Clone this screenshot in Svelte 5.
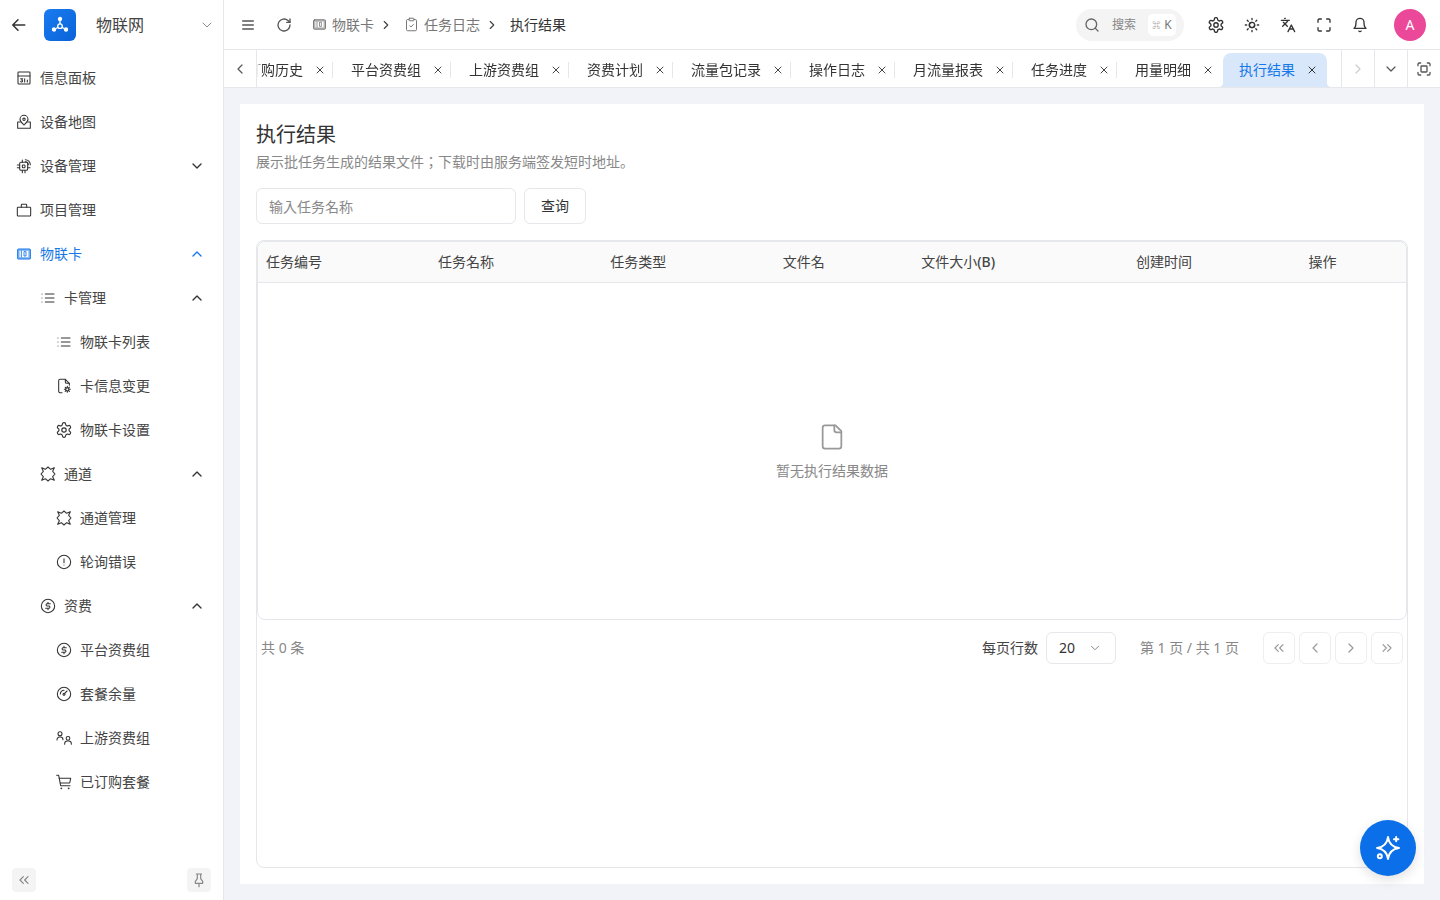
<script>
  const icons = {
    board: '<rect x="3" y="3" width="18" height="18" rx="1"/><path d="M3 9h18"/><path d="M7 13h3l-1.500 2a1.500 1.500 0 1 1-1.500 2"/><path d="M13 13v5M17 15v3"/>',
    map: '<path d="M18 8c0 3.800-4.200 6.800-6 8.500-1.800-1.700-6-4.700-6-8.500a6 6 0 0 1 12 0z"/><circle cx="12" cy="8" r="1.800"/><path d="M6.500 12H2.500v9.500h19V12h-4"/>',
    chip: '<rect x="5.500" y="6.500" width="12" height="12" rx="2"/><rect x="9.500" y="10.500" width="4" height="4" rx="1"/><path d="M2 10.500h3.500M2 14.500h3.500M17.500 14.500H21M9.500 3v3.500M9.500 18.500V22M13.500 18.500V22"/><path d="M14 2.500a7.500 7.500 0 0 1 7.500 7.500M14 5.500a4.500 4.500 0 0 1 4.500 4.500"/>',
    case: '<rect x="2" y="8" width="20" height="13" rx="1"/><path d="M8 8V4.500a1 1 0 0 1 1-1h6a1 1 0 0 1 1 1V8"/>',
    list: '<path d="M8 6h13M8 12h13M8 18h13M3 6h.01M3 12h.01M3 18h.01"/>',
    filecog: '<path d="M14 2H6a2 2 0 0 0-2 2v16a2 2 0 0 0 2 2h3"/><path d="M14 2v4a2 2 0 0 0 2 2h4l-6-6z"/><path d="M20 8v3"/><circle cx="17" cy="17" r="2.500"/><path d="M17 12.500v2M17 19.500v2M21.500 17h-2M14.500 17h-2M20.200 13.800l-1.400 1.400M15.200 18.800l-1.400 1.400M20.200 20.200l-1.400-1.400M15.200 15.200l-1.400-1.400"/>',
    gear: '<g transform="translate(-1.200 -1.200) scale(1.100)"><path d="M12.220 2h-.44a2 2 0 0 0-2 2v.18a2 2 0 0 1-1 1.730l-.43.250a2 2 0 0 1-2 0l-.15-.080a2 2 0 0 0-2.730.730l-.220.380a2 2 0 0 0 .730 2.730l.150.100a2 2 0 0 1 1 1.720v.510a2 2 0 0 1-1 1.740l-.150.090a2 2 0 0 0-.730 2.730l.220.380a2 2 0 0 0 2.730.730l.150-.080a2 2 0 0 1 2 0l.430.250a2 2 0 0 1 1 1.730V20a2 2 0 0 0 2 2h.44a2 2 0 0 0 2-2v-.18a2 2 0 0 1 1-1.730l.430-.250a2 2 0 0 1 2 0l.150.080a2 2 0 0 0 2.730-.730l.220-.390a2 2 0 0 0-.730-2.730l-.150-.080a2 2 0 0 1-1-1.740v-.500a2 2 0 0 1 1-1.740l.150-.090a2 2 0 0 0 .730-2.730l-.220-.380a2 2 0 0 0-2.730-.730l-.150.080a2 2 0 0 1-2 0l-.430-.250a2 2 0 0 1-1-1.730V4a2 2 0 0 0-2-2z"/><circle cx="12" cy="12" r="3"/></g>',
    channel: '<path d="M2.500 2.500 8 5l4-3.500L16 5l5.500-2.500L19 8l3.500 4L19 16l2.500 5.500L16 19l-4 3.500L8 19l-5.500 2.500L5 16l-3.500-4L5 8z"/>',
    alert: '<circle cx="12" cy="12" r="10"/><path d="M12 7v6M12 16.500h.01"/>',
    dollar: '<circle cx="12" cy="12" r="10"/><path d="M15.500 8.500h-5a1.800 1.800 0 0 0 0 3.500h3a1.800 1.800 0 0 1 0 3.500h-5M12 6.500v2M12 15.500v2"/>',
    gauge: '<circle cx="12" cy="12" r="10"/><path d="m13 11 3.500-3.500"/><circle cx="12" cy="12.500" r="1.500"/><path d="M6.500 12a5.500 5.500 0 0 1 5.500-5.500"/>',
    users: '<circle cx="6" cy="5.500" r="3"/><path d="M1.500 15v-.5a4 4 0 0 1 4-4h1a4 4 0 0 1 4 4"/><circle cx="18" cy="12.500" r="2.800"/><path d="M13 21.500v-1a4 4 0 0 1 4-4h2a4 4 0 0 1 4 4v1"/>',
    cart: '<path d="M1 2h3l3 15.500h14"/><path d="M4.800 6.500H22l-1.500 7H6.500"/><circle cx="8" cy="21.500" r=".6"/><circle cx="19" cy="21.500" r=".6"/>',
    card: '<rect x="2.500" y="4.500" width="19" height="15" rx="1.500" fill="currentColor" fill-opacity=".5"/><rect x="5.500" y="7.500" width="13" height="9" fill="#fff" stroke="none"/><path stroke-width="1.300" d="M8 7.500v9M12 9v6h3V9z"/>',
    clip: '<rect x="8" y="2" width="8" height="4" rx="1"/><path d="M16 4h2a2 2 0 0 1 2 2v14a2 2 0 0 1-2 2H6a2 2 0 0 1-2-2V6a2 2 0 0 1 2-2h2"/><path d="m9 14 2 2 4-4"/>'
  };

  const menu = [
    { icon: 'board', label: '信息面板', depth: 0 },
    { icon: 'map', label: '设备地图', depth: 0 },
    { icon: 'chip', label: '设备管理', depth: 0, arrow: 'down' },
    { icon: 'case', label: '项目管理', depth: 0 },
    { icon: 'card', label: '物联卡', depth: 0, arrow: 'up', active: true },
    { icon: 'list', label: '卡管理', depth: 1, arrow: 'up' },
    { icon: 'list', label: '物联卡列表', depth: 2 },
    { icon: 'filecog', label: '卡信息变更', depth: 2 },
    { icon: 'gear', label: '物联卡设置', depth: 2 },
    { icon: 'channel', label: '通道', depth: 1, arrow: 'up' },
    { icon: 'channel', label: '通道管理', depth: 2 },
    { icon: 'alert', label: '轮询错误', depth: 2 },
    { icon: 'dollar', label: '资费', depth: 1, arrow: 'up' },
    { icon: 'dollar', label: '平台资费组', depth: 2 },
    { icon: 'gauge', label: '套餐余量', depth: 2 },
    { icon: 'users', label: '上游资费组', depth: 2 },
    { icon: 'cart', label: '已订购套餐', depth: 2 }
  ];

  const tabs = ['订购历史', '平台资费组', '上游资费组', '资费计划', '流量包记录', '操作日志', '月流量报表', '任务进度', '用量明细', '执行结果'];

  const columns = [
    { label: '任务编号', width: 172 },
    { label: '任务名称', width: 172.5 },
    { label: '任务类型', width: 172.5 },
    { label: '文件名', width: 138.5 },
    { label: '文件大小', unit: '(B)', width: 215 },
    { label: '创建时间', width: 172.5 },
    { label: '操作', width: 105.5 }
  ];
</script>

{#snippet icon(name, size = 16)}
  <svg class="ico" width={size} height={size} viewBox="0 0 24 24" fill="none" stroke="currentColor" stroke-width="1.600" stroke-linecap="round" stroke-linejoin="round">{@html icons[name]}</svg>
{/snippet}

{#snippet chevron(dir, size = 16, weight = 2)}
  <svg class="ico" width={size} height={size} viewBox="0 0 24 24" fill="none" stroke="currentColor" stroke-width={weight} stroke-linecap="round" stroke-linejoin="round">
    {#if dir === 'down'}<path d="m6 9 6 6 6-6" />{/if}
    {#if dir === 'up'}<path d="m18 15-6-6-6 6" />{/if}
    {#if dir === 'left'}<path d="m15 18-6-6 6-6" />{/if}
    {#if dir === 'right'}<path d="m9 18 6-6-6-6" />{/if}
    {#if dir === 'lefts'}<path d="m11 17-5-5 5-5M18 17l-5-5 5-5" />{/if}
    {#if dir === 'rights'}<path d="m6 17 5-5-5-5M13 17l5-5-5-5" />{/if}
  </svg>
{/snippet}

<div class="app">
  <aside class="sidebar">
    <div class="brand">
      <svg class="back" width="18" height="18" viewBox="0 0 24 24" fill="none" stroke="currentColor" stroke-width="2" stroke-linecap="round" stroke-linejoin="round"><path d="m12 19-7-7 7-7M5 12h16" /></svg>
      <div class="logo">
        <svg width="18" height="18" viewBox="0 0 24 24" fill="none" stroke="#fff" stroke-width="1.800"><circle cx="12" cy="13.500" r="3" /><circle cx="12" cy="4" r="2" fill="#fff" /><circle cx="4" cy="18" r="2" fill="#fff" /><circle cx="20" cy="18" r="2" fill="#fff" /><path d="M12 6v4.500M6 17l3.500-2M18 17l-3.500-2" /></svg>
      </div>
      <span class="brand-name">物联网</span>
      <span class="brand-arrow">{@render chevron('down', 16, 1.5)}</span>
    </div>
    <nav class="menu">
      {#each menu as item}
        <div class="item depth{item.depth}" class:active={item.active}>
          <span class="item-icon">{@render icon(item.icon)}</span>
          <span class="item-label">{item.label}</span>
          {#if item.arrow}<span class="item-arrow">{@render chevron(item.arrow)}</span>{/if}
        </div>
      {/each}
    </nav>
    <div class="side-foot">
      <button class="foot-btn">{@render chevron('lefts', 16, 1.8)}</button>
      <button class="foot-btn">
        <svg width="16" height="16" viewBox="0 0 24 24" fill="none" stroke="currentColor" stroke-width="1.800" stroke-linecap="round" stroke-linejoin="round"><path d="M12 17v5M8 3h8M9.500 3v7l-3 4v3h11v-3l-3-4V3" /></svg>
      </button>
    </div>
  </aside>

  <div class="main">
    <header class="topbar">
      <span class="tool first">
        <svg width="16" height="16" viewBox="0 0 24 24" fill="none" stroke="currentColor" stroke-width="2" stroke-linecap="round"><path d="M4 6h16M4 12h16M4 18h16" /></svg>
      </span>
      <span class="tool refresh">
        <svg width="16" height="16" viewBox="0 0 24 24" fill="none" stroke="currentColor" stroke-width="2" stroke-linecap="round" stroke-linejoin="round"><path d="M21 12a9 9 0 1 1-3-6.700L21 8" /><path d="M21 3v5h-5" /></svg>
      </span>
      <div class="crumbs">
        <span class="crumb">{@render icon('card', 15)}物联卡</span>
        <span class="sep">{@render chevron('right', 14, 2)}</span>
        <span class="crumb">{@render icon('clip', 15)}任务日志</span>
        <span class="sep">{@render chevron('right', 14, 2)}</span>
        <span class="crumb current">执行结果</span>
      </div>
      <div class="top-right">
        <div class="search">
          <svg width="16" height="16" viewBox="0 0 24 24" fill="none" stroke="currentColor" stroke-width="2" stroke-linecap="round"><circle cx="11" cy="11" r="8" /><path d="m21 21-4.300-4.300" /></svg>
          <span class="search-text">搜索</span>
          <span class="kbd"><span class="cmd">⌘</span>K</span>
        </div>
        <span class="act">
          <svg class="ico" width="16" height="16" viewBox="0 0 24 24" fill="none" stroke="currentColor" stroke-width="1.900" stroke-linecap="round" stroke-linejoin="round">{@html icons.gear}</svg>
        </span>
        <span class="act">
          <svg width="16" height="16" viewBox="0 0 24 24" fill="none" stroke="currentColor" stroke-width="2" stroke-linecap="round"><path d="M12 8a4 4 0 1 0 4 4" /><circle cx="12" cy="12" r="4" /><path d="M12 2v2M12 20v2M4.900 4.900l1.400 1.400M17.700 17.700l1.400 1.400M2 12h2M20 12h2M6.300 17.700l-1.400 1.400M19.100 4.900l-1.400 1.400" /></svg>
        </span>
        <span class="act">
          <svg width="16" height="16" viewBox="0 0 24 24" fill="none" stroke="currentColor" stroke-width="2" stroke-linecap="round" stroke-linejoin="round"><path d="m5 8 6 6M4 14l6-6 2-3M2 5h12M7 2h1M22 22l-5-10-5 10M14 18h6" /></svg>
        </span>
        <span class="act">
          <svg width="16" height="16" viewBox="0 0 24 24" fill="none" stroke="currentColor" stroke-width="2" stroke-linecap="round" stroke-linejoin="round"><path d="M8 3H5a2 2 0 0 0-2 2v3M21 8V5a2 2 0 0 0-2-2h-3M3 16v3a2 2 0 0 0 2 2h3M16 21h3a2 2 0 0 0 2-2v-3" /></svg>
        </span>
        <span class="act">
          <svg width="16" height="16" viewBox="0 0 24 24" fill="none" stroke="currentColor" stroke-width="2" stroke-linecap="round" stroke-linejoin="round"><path d="M6 8a6 6 0 0 1 12 0c0 7 3 9 3 9H3s3-2 3-9" /><path d="M10.300 21a1.940 1.940 0 0 0 3.400 0" /></svg>
        </span>
        <span class="avatar">A</span>
      </div>
    </header>

    <div class="tabbar">
      <button class="tab-ctl left">{@render chevron('left', 16, 1.8)}</button>
      <div class="tabs">
        {#each tabs as tab, i}
          <div class="tab" class:on={i === tabs.length - 1}>
            <span>{tab}</span>
            <svg class="x" width="12" height="12" viewBox="0 0 24 24" fill="none" stroke="currentColor" stroke-width="2" stroke-linecap="round"><path d="M18 6 6 18M6 6l12 12" /></svg>
          </div>
        {/each}
      </div>
      <button class="tab-ctl muted">{@render chevron('right', 16, 1.8)}</button>
      <button class="tab-ctl">{@render chevron('down', 16, 1.8)}</button>
      <button class="tab-ctl">
        <svg width="16" height="16" viewBox="0 0 24 24" fill="none" stroke="currentColor" stroke-width="2" stroke-linecap="round" stroke-linejoin="round"><path d="M3 7V5a2 2 0 0 1 2-2h2M17 3h2a2 2 0 0 1 2 2v2M21 17v2a2 2 0 0 1-2 2h-2M7 21H5a2 2 0 0 1-2-2v-2" /><rect x="7.500" y="7.500" width="9" height="9" rx="1" /></svg>
      </button>
    </div>

    <main class="content">
      <section class="card">
        <h1>执行结果</h1>
        <p class="desc">展示批任务生成的结果文件；下载时由服务端签发短时地址。</p>
        <div class="filters">
          <input class="field" placeholder="输入任务名称" />
          <button class="query">查询</button>
        </div>
        <div class="panel">
          <div class="table">
            <div class="thead">
              {#each columns as col}
                <div class="th" style="width: {col.width}px">{col.label}{#if col.unit}<span class="unit">{col.unit}</span>{/if}</div>
              {/each}
            </div>
            <div class="empty">
              <svg width="28" height="28" viewBox="0 0 24 24" fill="none" stroke="currentColor" stroke-width="1.500" stroke-linecap="round" stroke-linejoin="round"><path d="M15 2H6a2 2 0 0 0-2 2v16a2 2 0 0 0 2 2h12a2 2 0 0 0 2-2V7z" /><path d="M14 2v4a2 2 0 0 0 2 2h4" /></svg>
              <span>暂无执行结果数据</span>
            </div>
          </div>
          <div class="pager">
            <span class="total">共 0 条</span>
            <span class="rows">每页行数</span>
            <div class="select"><span>20</span>{@render chevron('down', 14, 1.5)}</div>
            <span class="page-info">第 1 页 / 共 1 页</span>
            <div class="page-btns">
              <button>{@render chevron('lefts', 16, 1.8)}</button>
              <button>{@render chevron('left', 16, 1.8)}</button>
              <button>{@render chevron('right', 16, 1.8)}</button>
              <button>{@render chevron('rights', 16, 1.8)}</button>
            </div>
          </div>
        </div>
      </section>
    </main>
  </div>

  <button class="fab">
    <svg width="28" height="28" viewBox="0 0 24 24" fill="none" stroke="#fff" stroke-width="1.700" stroke-linecap="round" stroke-linejoin="round"><path d="M12 2.600c.8 5.800 3.600 8.600 9.400 9.400-5.800.8-8.600 3.600-9.400 9.400-.8-5.800-3.600-8.600-9.400-9.400 5.800-.8 8.600-3.600 9.400-9.400z" /><path d="M19 2.500v3.800M17.100 4.400h3.800" /><circle cx="5" cy="19" r="1.700" /></svg>
  </button>
</div>

<style>
  :global(body) {
    margin: 0;
    background: #f1f3f8;
    font-family: "Noto Sans", "Noto Sans CJK JP", sans-serif;
    font-size: 14px;
    line-height: 20px;
    color: #333;
  }

  button {
    font: inherit;
    padding: 0;
    border: none;
    background: none;
    color: inherit;
  }

  .ico {
    display: block;
    flex: none;
  }

  .app {
    display: flex;
    width: 1440px;
    height: 900px;
    overflow: hidden;
    position: relative;
  }

  .sidebar {
    width: 224px;
    flex: none;
    box-sizing: border-box;
    background: #fff;
    border-right: 1px solid #e5e7eb;
    display: flex;
    flex-direction: column;
  }

  .brand {
    height: 50px;
    flex: none;
    display: flex;
    align-items: center;
    padding-left: 9px;
    color: #333;
  }

  .back {
    flex: none;
    margin-right: 17px;
  }

  .logo {
    width: 32px;
    height: 32px;
    flex: none;
    border-radius: 6px;
    background: linear-gradient(135deg, #1a7bf0, #0a62d8);
    display: flex;
    align-items: center;
    justify-content: center;
  }

  .brand-name {
    margin-left: 20px;
    font-size: 16px;
    line-height: 24px;
    color: #444;
  }

  .brand-arrow {
    margin-left: auto;
    margin-right: 8px;
    color: #888;
  }

  .menu {
    flex: 1;
    padding-top: 6px;
  }

  .item {
    height: 44px;
    display: flex;
    align-items: center;
    color: #333;
  }

  .depth0 { padding-left: 16px; }
  .depth1 { padding-left: 40px; }
  .depth2 { padding-left: 56px; }

  .item-icon {
    width: 16px;
    margin-right: 8px;
    flex: none;
  }

  .item-label {
    color: #444;
  }

  .item-arrow {
    margin-left: auto;
    margin-right: 18px;
    color: #333;
  }

  .item.active .item-label,
  .item.active .item-arrow,
  .item.active .item-icon {
    color: #1677e8;
  }

  .side-foot {
    height: 32px;
    flex: none;
    padding: 0 12px;
    display: flex;
    justify-content: space-between;
  }

  .foot-btn {
    width: 24px;
    height: 24px;
    border-radius: 4px;
    background: #f4f4f5;
    color: #888;
    display: flex;
    align-items: center;
    justify-content: center;
  }

  .main {
    flex: 1;
    min-width: 0;
    display: flex;
    flex-direction: column;
  }

  .topbar {
    height: 50px;
    flex: none;
    box-sizing: border-box;
    background: #fff;
    border-bottom: 1px solid #e5e7eb;
    display: flex;
    align-items: center;
    padding-left: 16px;
  }

  .tool {
    color: #555;
    display: block;
    height: 16px;
  }

  .refresh {
    margin-left: 20px;
  }

  .crumbs {
    display: flex;
    align-items: center;
    margin-left: 20px;
    color: #777;
  }

  .crumb {
    display: flex;
    align-items: center;
    gap: 5px;
  }

  .crumb.current {
    color: #333;
  }

  .sep {
    margin: 0 11px 0 5px;
    color: #444;
  }

  .top-right {
    margin-left: auto;
    display: flex;
    align-items: center;
    padding-right: 14px;
  }

  .search {
    width: 108px;
    height: 32px;
    box-sizing: border-box;
    border-radius: 16px;
    background: #f4f4f5;
    display: flex;
    align-items: center;
    padding-left: 8px;
    color: #666;
  }

  .search-text {
    margin-left: 12px;
    font-size: 12px;
    color: #888;
  }

  .kbd {
    margin-left: 12px;
    width: 28px;
    height: 22px;
    border-radius: 5px;
    background: #fff;
    font-size: 12px;
    color: #777;
    display: flex;
    align-items: center;
    justify-content: center;
    gap: 4px;
  }

  .cmd {
    font-size: 8px;
  }

  .act {
    width: 16px;
    height: 16px;
    margin-left: 20px;
    color: #333;
  }

  .search + .act {
    margin-left: 24px;
  }

  .avatar {
    width: 32px;
    height: 32px;
    margin-left: 26px;
    border-radius: 50%;
    background: #ec4899;
    color: #fff;
    display: flex;
    align-items: center;
    justify-content: center;
    font-size: 14px;
  }

  .tabbar {
    height: 38px;
    flex: none;
    box-sizing: border-box;
    background: #fff;
    border-bottom: 1px solid #e5e7eb;
    display: flex;
  }

  .tab-ctl {
    width: 33px;
    flex: none;
    box-sizing: border-box;
    border-left: 1px solid #e5e7eb;
    color: #555;
    display: flex;
    align-items: center;
    justify-content: center;
  }

  .tab-ctl.left {
    border-left: none;
    border-right: 1px solid #e5e7eb;
  }

  .tab-ctl.muted {
    color: #ccc;
  }

  .tabs {
    flex: 1;
    min-width: 0;
    display: flex;
    align-items: flex-end;
    overflow: hidden;
    mask-image: linear-gradient(90deg, transparent, #000 5px);
  }

  .tab {
    position: relative;
    flex: none;
    box-sizing: border-box;
    height: 34px;
    padding: 0 7px 0 18px;
    display: flex;
    align-items: center;
    gap: 11px;
    color: #333;
  }

  .tab:first-child {
    margin-left: -28px;
  }

  .tab::after {
    content: "";
    position: absolute;
    right: 0;
    top: 9px;
    height: 16px;
    width: 1px;
    background: #e5e7eb;
  }

  .tab .x {
    flex: none;
    color: #444;
  }

  .tab:nth-last-child(2)::after {
    display: none;
  }

  .tab.on {
    margin-left: 2px;
    padding: 0 9px 0 16px;
    background: #d9e7fb;
    border-radius: 8px 8px 0 0;
    color: #1677e8;
  }

  .tab.on::before,
  .tab.on::after {
    content: "";
    position: absolute;
    top: auto;
    bottom: 0;
    width: 5px;
    height: 5px;
  }

  .tab.on::before {
    left: -5px;
    background: radial-gradient(circle at 0 0, transparent 5px, #d9e7fb 5.5px);
  }

  .tab.on::after {
    right: -5px;
    background: radial-gradient(circle at 100% 0, transparent 5px, #d9e7fb 5.5px);
  }

  .tab.on .x {
    color: #333;
  }

  .content {
    flex: 1;
    min-height: 0;
    padding: 16px;
    display: flex;
  }

  .card {
    flex: 1;
    background: #fff;
    padding: 16px 16px;
    display: flex;
    flex-direction: column;
    min-width: 0;
  }

  h1 {
    margin: 0;
    font-size: 20px;
    font-weight: 400;
    line-height: 30px;
    color: #333;
  }

  .desc {
    margin: 1px 0 0;
    line-height: 22px;
    color: #888;
  }

  .filters {
    display: flex;
    gap: 8px;
    margin-top: 15px;
  }

  .field {
    width: 260px;
    height: 36px;
    box-sizing: border-box;
    border: 1px solid #e5e7eb;
    border-radius: 6px;
    padding: 1px 12px 0;
    font: inherit;
    outline: none;
  }

  .field::placeholder {
    color: #888;
  }

  .query {
    width: 62px;
    height: 36px;
    box-sizing: border-box;
    border: 1px solid #e5e7eb;
    border-radius: 6px;
    color: #333;
  }

  .panel {
    flex: 1;
    margin-top: 16px;
    min-height: 0;
    border: 1px solid #e5e7eb;
    border-radius: 8px;
  }

  .table {
    height: 379px;
    box-sizing: border-box;
    border: 1px solid #e5e7eb;
    border-radius: 8px;
    display: flex;
    flex-direction: column;
  }

  .thead {
    height: 40px;
    flex: none;
    display: flex;
    background: #fafafa;
    border-bottom: 1px solid #e5e7eb;
    border-radius: 8px 8px 0 0;
  }

  .th {
    box-sizing: border-box;
    padding: 0 8px;
    line-height: 40px;
    color: #444;
  }

  .unit {
    font-weight: 500;
  }

  .empty {
    flex: 1;
    display: flex;
    flex-direction: column;
    align-items: center;
    justify-content: center;
    gap: 10px;
    padding-top: 1px;
    color: #888;
  }

  .empty svg {
    color: #999;
  }

  .pager {
    display: flex;
    align-items: center;
    height: 32px;
    margin-top: 12px;
    padding: 0 4px;
  }

  .total {
    color: #888;
    margin-right: auto;
  }

  .rows {
    color: #444;
  }

  .select {
    width: 70px;
    height: 32px;
    margin-left: 8px;
    box-sizing: border-box;
    border: 1px solid #e5e7eb;
    border-radius: 6px;
    padding: 0 13px 0 12px;
    display: flex;
    align-items: center;
    justify-content: space-between;
    color: #777;
  }

  .select span {
    color: #333;
  }

  .page-info {
    margin-left: 24px;
    color: #888;
  }

  .page-btns {
    display: flex;
    gap: 4px;
    margin-left: 24px;
  }

  .page-btns button {
    width: 32px;
    height: 32px;
    box-sizing: border-box;
    border: 1px solid #eee;
    border-radius: 6px;
    color: #999;
    display: flex;
    align-items: center;
    justify-content: center;
  }

  .fab {
    position: absolute;
    left: 1360px;
    top: 820px;
    width: 56px;
    height: 56px;
    border-radius: 50%;
    background: #0a6fe8;
    box-shadow: 0 4px 12px rgba(0, 0, 0, 0.12);
    display: flex;
    align-items: center;
    justify-content: center;
  }
</style>
